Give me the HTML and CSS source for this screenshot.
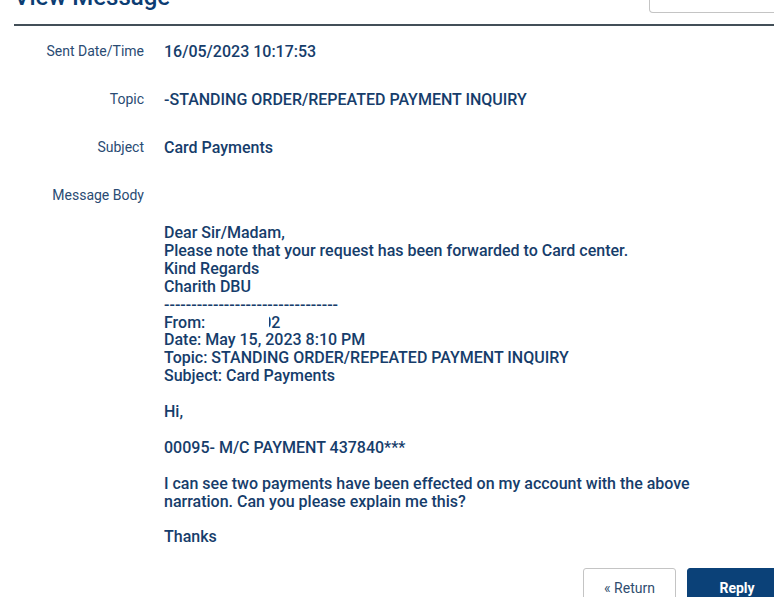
FILE: index.html
```html
<!DOCTYPE html>
<html lang="en">
<head>
<meta charset="utf-8">
<title>View Message</title>
<link rel="stylesheet" href="styles.css">
</head>
<body>
<div class="page">
  <div class="header">
    <h1 class="title">View Message</h1>
    <div class="search-box"></div>
  </div>
  <div class="fields">
    <div class="row">
      <div class="label">Sent Date/Time</div>
      <div class="value">16/05/2023 10:17:53</div>
    </div>
    <div class="row">
      <div class="label">Topic</div>
      <div class="value">-STANDING ORDER/REPEATED PAYMENT INQUIRY</div>
    </div>
    <div class="row">
      <div class="label">Subject</div>
      <div class="value">Card Payments</div>
    </div>
    <div class="row">
      <div class="label">Message Body</div>
      <div class="value"></div>
    </div>
  </div>
  <div class="body-wrap">
    <div class="message">
      <div>Dear Sir/Madam,</div>
      <div>Please note that your request has been forwarded to Card center.</div>
      <div>Kind Regards</div>
      <div>Charith DBU</div>
      <div>--------------------------------</div>
      <div>From:<span class="redact"><span class="clip">0</span>2</span></div>
      <div>Date: May 15, 2023 8:10 PM</div>
      <div>Topic: STANDING ORDER/REPEATED PAYMENT INQUIRY</div>
      <div>Subject: Card Payments</div>
      <div class="blank"></div>
      <div>Hi,</div>
      <div class="blank"></div>
      <div>00095- M/C PAYMENT 437840***</div>
      <div class="blank"></div>
      <div>I can see two payments have been effected on my account with the above<br>narration. Can you please explain me this?</div>
      <div class="blank"></div>
      <div>Thanks</div>
    </div>
  </div>
  <div class="actions">
    <button class="btn btn-return">&laquo; Return</button>
    <button class="btn btn-reply">Reply</button>
  </div>
</div>
</body>
</html>
```
FILE: styles.css
```css
html, body {
  margin: 0;
  padding: 0;
  overflow: hidden;
  background: #ffffff;
}

body {
  font-family: Roboto, "Liberation Sans", Arial, sans-serif;
  color: #163a66;
}

.page {
  width: 773px;
  padding-left: 14px;
}

.header {
  display: flex;
  justify-content: space-between;
  align-items: flex-end;
  height: 24px;
  border-bottom: 2px solid #434f58;
}

.title {
  margin: 0 0 15px 0;
  font-size: 24px;
  line-height: 24px;
  font-weight: 500;
  color: #0c3d73;
}

.search-box {
  align-self: flex-start;
  width: 136px;
  height: 12px;
  border: 1px solid #c4c4c4;
  border-top: none;
  border-radius: 0 0 4px 4px;
}

.fields {
  padding-top: 1px;
}

.row {
  display: flex;
  align-items: center;
  height: 48px;
  gap: 20px;
}

.label {
  width: 130px;
  flex: none;
  text-align: right;
  font-size: 14px;
  color: #2a4b73;
}

.value {
  font-size: 16px;
  font-weight: 500;
  color: #163d6b;
}

.body-wrap {
  padding: 5px 0 0 150px;
}

.message {
  font-size: 16px;
  line-height: 17.9px;
  font-weight: 500;
  color: #163d6b;
}

.blank {
  height: 17.9px;
}

.redact {
  margin-left: 64px;
}

.clip {
  display: inline-block;
  width: 2px;
  overflow: hidden;
  direction: rtl;
  vertical-align: bottom;
}

.actions {
  display: flex;
  justify-content: flex-end;
  gap: 11px;
  margin-top: 22px;
}

.btn {
  font-family: Roboto, "Liberation Sans", Arial, sans-serif;
  font-size: 14px;
  line-height: 20px;
  height: 40px;
  border-radius: 3px;
  cursor: pointer;
}

.btn-return {
  width: 93px;
  background: #ffffff;
  border: 1px solid #c4c4c4;
  color: #2f4d6f;
}

.btn-reply {
  width: 100px;
  background: #0b4178;
  border: 1px solid #0b4178;
  color: #ffffff;
  font-weight: 700;
}
```
